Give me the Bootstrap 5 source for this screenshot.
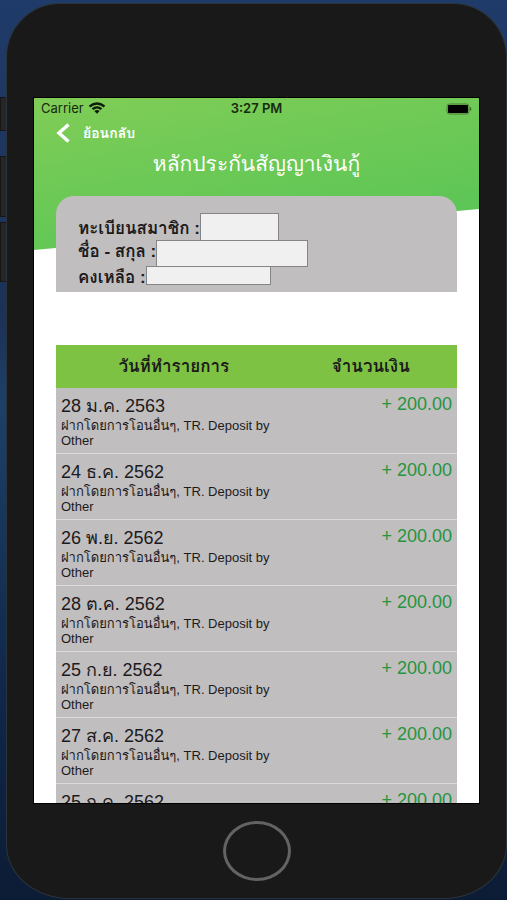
<!DOCTYPE html>
<html lang="th">
<head>
<meta charset="utf-8">
<meta name="viewport" content="width=device-width, initial-scale=1">
<title>หลักประกันสัญญาเงินกู้</title>
<link href="https://cdn.jsdelivr.net/npm/bootstrap@5.3.0/dist/css/bootstrap.min.css" rel="stylesheet">
<style>
body{font-family:"Liberation Sans",Thonburi,Loma,Garuda,"Noto Sans Thai Looped","Noto Sans Thai",sans-serif;color:#1c1a1c;background:linear-gradient(#1f3b69,#1c3158 35%,#1d4068 45%,#10284c 75%,#0d1c35)}
.side-key{left:0;width:7px;background:#262626;border:1px solid #161616}
.key-mute{top:97px;height:34px}
.key-up{top:156px;height:61px}
.key-down{top:222px;height:60px}
.phone{margin:3px 0 1px 6px;height:calc(100vh - 4px);padding:94px 27px 17px;background:#191919;border:1px solid #2b343a;border-radius:54px 54px 64px 64px / 54px}
.screen{min-height:0;outline:1px solid #000}
.hero-bg{top:0;left:0;right:0;height:152px;background:linear-gradient(170deg,#80cd56,#54c456);clip-path:polygon(0 0,100% 0,100% 111px,0 100%)}
.status-bar{height:20px;padding:0 7px;font:13px/20px Inter,sans-serif;color:#17290f}
.status-bar time{font-weight:600}
.back-link{height:30px;padding-left:22px;gap:13px;font-size:14px;font-weight:700}
.page-title{height:48px;font-size:21px;line-height:32px;font-weight:400}
.content-wrap{padding:0 22px}
.member-box{height:96px;padding:17px 22px 0;background:#c1bebf;border-radius:18px 18px 0 0;font-size:17px;line-height:24px;font-weight:600}
.masked{background:#f0f0f0;border:1px solid #858585}
.m-id{width:79px;height:28px}
.m-name{width:152px;height:27px}
.m-left{width:125px;height:19px}
.line-id{height:27px}
.line-name{height:26px}
.tx{margin-top:53px;table-layout:fixed;border-collapse:separate;border-spacing:0}
.tx th{height:43px;background:#7dc242;font-size:17px;line-height:24px;font-weight:600}
.tx td{height:66px;background:#c1bebf;border-bottom:1px solid #dcdada;padding:7px 5px 5px}
.tx-date{font-size:18px;line-height:23px}
.tx-note{font-size:13px;line-height:15px}
.tx .amount{font-size:18px;line-height:18px;color:#259540}
.home-key{width:68px;height:60px;border:3px solid #636363;border-radius:50%;background:transparent;margin-top:18px}
</style>
<script src="https://cdn.jsdelivr.net/npm/bootstrap@5.3.0/dist/js/bootstrap.bundle.min.js"></script>
</head>
<body class="vh-100 overflow-hidden position-relative d-flow-root">
<span class="side-key key-mute position-absolute"></span>
<span class="side-key key-up position-absolute"></span>
<span class="side-key key-down position-absolute"></span>
<div class="phone d-flex flex-column align-items-center position-relative">
  <div class="screen flex-grow-1 w-100 bg-white overflow-hidden position-relative">
    <div class="hero-bg position-absolute"></div>
    <div class="position-relative">
      <div class="status-bar row gx-0 align-items-center">
        <div class="col d-flex align-items-center gap-1">Carrier
          <svg width="18" height="12" viewBox="0 0 18 12" aria-label="Wi-Fi"><path d="M1.500 4.500Q9-1.500 16.500 4.500M4.500 7.200Q9 3.500 13.500 7.200" fill="none" stroke="#101c0b" stroke-width="2.300"/><path d="M6.300 9Q9 7 11.700 9L9 11.800z" fill="#101c0b"/></svg>
        </div>
        <time class="col-auto">3:27 PM</time>
        <div class="col text-end lh-1">
          <svg width="26" height="12" viewBox="0 0 26 12" aria-label="Battery"><rect x="1" y="1" width="22" height="10" rx="2.500" fill="none" stroke="#4a7a35"/><rect x="2" y="2" width="20" height="8" rx="1" fill="#000"/><path d="M24.500 4.500v3" stroke="#3d692b" stroke-width="1.500"/></svg>
        </div>
      </div>
      <a href="#" class="back-link d-flex align-items-center text-white text-decoration-none">
        <svg width="14" height="20" viewBox="0 0 14 20" aria-hidden="true"><path d="M12.500 1.500L3 10L12.500 18.500" fill="none" stroke="#fff" stroke-width="3.500"/></svg>
        <span>ย้อนกลับ</span>
      </a>
      <h1 class="page-title text-white text-center mb-0">หลักประกันสัญญาเงินกู้</h1>
      <main class="content-wrap">
        <section class="member-box">
          <div class="line-id d-flex"><span class="pt-1">ทะเบียนสมาชิก :</span><span class="masked m-id"></span></div>
          <div class="line-name d-flex"><span>ชื่อ - สกุล :</span><span class="masked m-name"></span></div>
          <div class="d-flex"><span>คงเหลือ :</span><span class="masked m-left"></span></div>
        </section>
        <table class="tx w-100">
          <colgroup><col style="width:57%"><col></colgroup>
          <thead><tr><th class="text-center ps-2">วันที่ทำรายการ</th><th class="text-center">จำนวนเงิน</th></tr></thead>
          <tbody class="align-top">
            <tr><td><div class="tx-date">28 ม.ค. 2563</div><div class="tx-note">ฝากโดยการโอนอื่นๆ, TR. Deposit by Other</div></td><td class="amount text-end">+ 200.00</td></tr>
            <tr><td><div class="tx-date">24 ธ.ค. 2562</div><div class="tx-note">ฝากโดยการโอนอื่นๆ, TR. Deposit by Other</div></td><td class="amount text-end">+ 200.00</td></tr>
            <tr><td><div class="tx-date">26 พ.ย. 2562</div><div class="tx-note">ฝากโดยการโอนอื่นๆ, TR. Deposit by Other</div></td><td class="amount text-end">+ 200.00</td></tr>
            <tr><td><div class="tx-date">28 ต.ค. 2562</div><div class="tx-note">ฝากโดยการโอนอื่นๆ, TR. Deposit by Other</div></td><td class="amount text-end">+ 200.00</td></tr>
            <tr><td><div class="tx-date">25 ก.ย. 2562</div><div class="tx-note">ฝากโดยการโอนอื่นๆ, TR. Deposit by Other</div></td><td class="amount text-end">+ 200.00</td></tr>
            <tr><td><div class="tx-date">27 ส.ค. 2562</div><div class="tx-note">ฝากโดยการโอนอื่นๆ, TR. Deposit by Other</div></td><td class="amount text-end">+ 200.00</td></tr>
            <tr><td><div class="tx-date">25 ก.ค. 2562</div><div class="tx-note">ฝากโดยการโอนอื่นๆ, TR. Deposit by Other</div></td><td class="amount text-end">+ 200.00</td></tr>
          </tbody>
        </table>
      </main>
    </div>
  </div>
  <button type="button" class="home-key flex-shrink-0" aria-label="Home"></button>
</div>
</body>
</html>
